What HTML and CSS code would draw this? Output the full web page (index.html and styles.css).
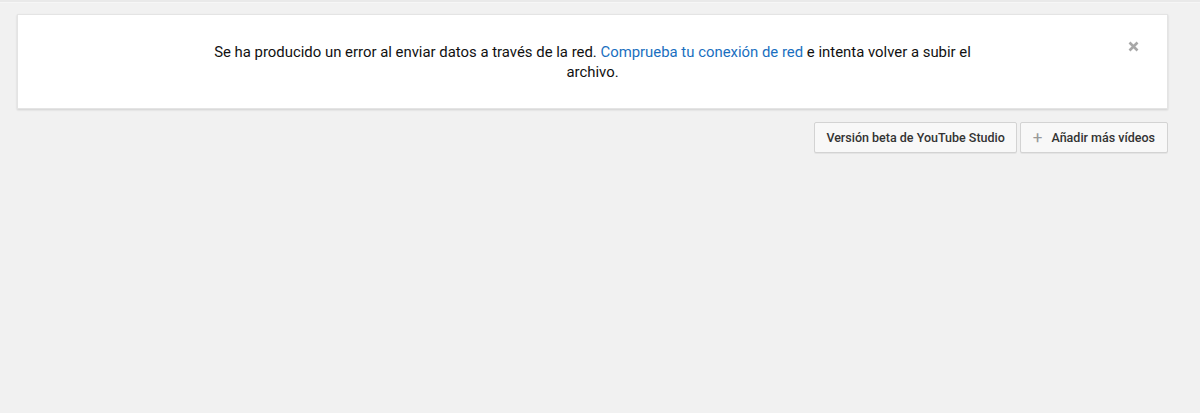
FILE: index.html
```html
<!DOCTYPE html>
<html lang="es">
<head>
<meta charset="utf-8">
<link rel="stylesheet" href="styles.css">
</head>
<body>
<div class="topline"></div>
<main class="page">
  <section class="alert">
    <p class="alert-text">Se ha producido un error al enviar datos a través de la red. <a class="alert-link" href="#">Comprueba tu conexión de red</a> e intenta volver a subir el archivo.</p>
    <button class="alert-close" aria-label="Cerrar">
      <svg width="11" height="11" viewBox="0 0 11 11"><path d="M1.5 1.5 L9.5 9.5 M9.5 1.5 L1.5 9.5" stroke="#a8a8a8" stroke-width="2.6" stroke-linecap="butt"/></svg>
    </button>
  </section>
  <div class="actions">
    <button class="btn btn-studio">Versión beta de YouTube Studio</button>
    <button class="btn"><span class="plus">+</span>Añadir más vídeos</button>
  </div>
</main>
</body>
</html>
```
FILE: styles.css
```css
html, body {
  margin: 0;
  padding: 0;
  background: #f1f1f1;
  font-family: Roboto, "Liberation Sans", Arial, sans-serif;
}
body {
  height: 413px;
  overflow: hidden;
}
.topline {
  height: 2px;
  background: #e9e9e9;
  border-bottom: 1px solid #f6f6f6;
}
.page {
  padding: 11px 32px 0 17px;
}
.alert {
  position: relative;
  background: #fff;
  height: 95px;
  box-sizing: border-box;
  box-shadow: 0 1px 2px rgba(0,0,0,0.14);
  border: 1px solid #e4e4e4;
  display: flex;
  justify-content: center;
  padding-top: 27px;
}
.alert-text {
  margin: 0;
  width: 790px;
  text-align: center;
  font-size: 14.9px;
  line-height: 20px;
  color: #111;
}
.alert-link {
  color: #1a6fc0;
  text-decoration: none;
}
.alert-close {
  position: absolute;
  top: 26px;
  right: 28px;
  border: 0;
  background: none;
  padding: 0;
  width: 11px;
  height: 11px;
  display: flex;
}
.actions {
  display: flex;
  justify-content: flex-end;
  gap: 3px;
  margin-top: 13px;
}
.btn {
  height: 31px;
  box-sizing: border-box;
  padding: 0 12px;
  background: #f8f8f8;
  border: 1px solid #d3d3d3;
  border-radius: 2px;
  box-shadow: 0 1px 0 rgba(0,0,0,0.05);
  font-family: Roboto, "Liberation Sans", Arial, sans-serif;
  font-size: 12.5px;
  font-weight: 500;
  color: #333;
  display: flex;
  align-items: center;
}
.btn-studio {
  padding: 0 11px;
}
.plus {
  color: #999;
  font-size: 17px;
  font-weight: 400;
  margin-right: 9px;
  line-height: 1;
}
```
